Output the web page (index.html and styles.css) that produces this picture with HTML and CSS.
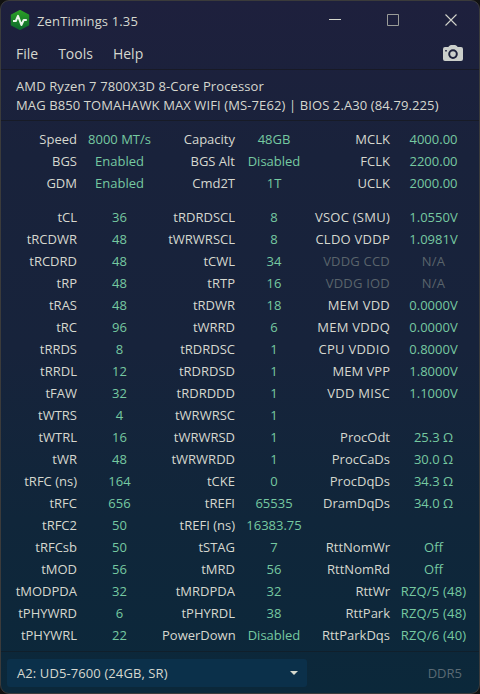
FILE: index.html
```html
<!DOCTYPE html>
<html lang="en">
  <head>
    <meta charset="utf-8" />
    <meta name="viewport" content="width=device-width, initial-scale=1" />
    <title>ZenTimings 1.35</title>
    <link rel="stylesheet" href="styles.css">
  </head>
  <body>
    <div class="window">
      <header class="titlebar">
        <svg class="logo" width="20" height="20" viewBox="0 0 20 20">
          <defs>
            <linearGradient id="green" x1="0" y1="0" x2="0" y2="1">
              <stop offset="0" stop-color="#2ba026" />
              <stop offset="1" stop-color="#0c682c" />
            </linearGradient>
          </defs>
          <path d="M10 0.6 L18.5 5 V15 L10 19.4 L1.5 15 V5 Z" fill="url(#green)" stroke="url(#green)" stroke-width="1.4" stroke-linejoin="round" />
          <path d="M3 11 H5.8 L8 5.8 L11.4 15 L13.7 10 H16.8" fill="none" stroke="#eaf5ea" stroke-width="2" stroke-linejoin="round" />
        </svg>
        <span class="title">ZenTimings 1.35</span>
        <div class="controls">
          <svg width="12" height="12" viewBox="0 0 12 12"><path d="M0 5.5 H12" stroke="#d6d8cd" /></svg>
          <svg width="12" height="12" viewBox="0 0 12 12"><path d="M.5 .5 H11.5 V11.5 H.5 Z" stroke="#9a9c98" fill="none" /></svg>
          <svg width="12" height="12" viewBox="0 0 12 12"><path d="M.5 .5 L11.5 11.5 M11.5 .5 L.5 11.5" stroke="#d0d2ca" stroke-width="1.1" /></svg>
        </div>
      </header>

      <nav class="menu">
        <a class="file">File</a>
        <a class="tools">Tools</a>
        <a class="help">Help</a>
        <svg class="camera" width="20" height="16" viewBox="0 0 20 16">
          <path fill="#cbcfcb" fill-rule="evenodd" d="M2 2 H5.2 L6.8 .6 Q7.3 0 8 0 H12 Q12.7 0 13.2 .6 L14.8 2 H18 Q20 2 20 4 V14 Q20 16 18 16 H2 Q0 16 0 14 V4 Q0 2 2 2 Z M10 4.3 A4.8 4.8 0 1 0 10 13.9 A4.8 4.8 0 1 0 10 4.3 Z M2.2 5 V6.4 H3.8 V5 Z" />
          <circle cx="10" cy="9.1" r="2.8" fill="#cbcfcb" />
        </svg>
      </nav>

      <div class="system">
        <p class="cpu">AMD Ryzen 7 7800X3D 8-Core Processor</p>
        <p class="board">MAG B850 TOMAHAWK MAX WIFI (MS-7E62) | BIOS 2.A30 (84.79.225)</p>
      </div>

      <main>
        <table>
          <colgroup>
            <col class="l1"><col class="v1"><col class="l2"><col class="v2"><col class="l3"><col class="v3">
          </colgroup>
          <tbody>
            <tr><th>Speed</th><td>8000 MT/s</td><th>Capacity</th><td>48GB</td><th>MCLK</th><td>4000.00</td></tr>
            <tr><th>BGS</th><td>Enabled</td><th>BGS Alt</th><td>Disabled</td><th>FCLK</th><td>2200.00</td></tr>
            <tr><th>GDM</th><td>Enabled</td><th>Cmd2T</th><td>1T</td><th>UCLK</th><td>2000.00</td></tr>
          </tbody>
        </table>
        <table>
          <colgroup>
            <col class="l1"><col class="v1"><col class="l2"><col class="v2"><col class="l3"><col class="v3">
          </colgroup>
          <tbody>
            <tr><th>tCL</th><td>36</td><th>tRDRDSCL</th><td>8</td><th class="wide">VSOC (SMU)</th><td>1.0550V</td></tr>
            <tr><th>tRCDWR</th><td>48</td><th>tWRWRSCL</th><td>8</td><th class="wide">CLDO VDDP</th><td>1.0981V</td></tr>
            <tr><th>tRCDRD</th><td>48</td><th>tCWL</th><td>34</td><th class="off">VDDG CCD</th><td class="off">N/A</td></tr>
            <tr><th>tRP</th><td>48</td><th>tRTP</th><td>16</td><th class="off">VDDG IOD</th><td class="off">N/A</td></tr>
            <tr><th>tRAS</th><td>48</td><th>tRDWR</th><td>18</td><th class="wide">MEM VDD</th><td>0.0000V</td></tr>
            <tr><th>tRC</th><td>96</td><th>tWRRD</th><td>6</td><th class="wide">MEM VDDQ</th><td>0.0000V</td></tr>
            <tr><th>tRRDS</th><td>8</td><th>tRDRDSC</th><td>1</td><th class="wide">CPU VDDIO</th><td>0.8000V</td></tr>
            <tr><th>tRRDL</th><td>12</td><th>tRDRDSD</th><td>1</td><th>MEM VPP</th><td>1.8000V</td></tr>
            <tr><th>tFAW</th><td>32</td><th>tRDRDDD</th><td>1</td><th class="wide">VDD MISC</th><td>1.1000V</td></tr>
            <tr><th>tWTRS</th><td>4</td><th>tWRWRSC</th><td>1</td><th></th><td></td></tr>
            <tr><th>tWTRL</th><td>16</td><th>tWRWRSD</th><td>1</td><th>ProcOdt</th><td>25.3 Ω</td></tr>
            <tr><th>tWR</th><td>48</td><th>tWRWRDD</th><td>1</td><th>ProcCaDs</th><td>30.0 Ω</td></tr>
            <tr><th>tRFC (ns)</th><td>164</td><th>tCKE</th><td>0</td><th>ProcDqDs</th><td>34.3 Ω</td></tr>
            <tr><th>tRFC</th><td>656</td><th>tREFI</th><td>65535</td><th>DramDqDs</th><td>34.0 Ω</td></tr>
            <tr><th>tRFC2</th><td>50</td><th>tREFI (ns)</th><td>16383.75</td><th></th><td></td></tr>
            <tr><th>tRFCsb</th><td>50</td><th>tSTAG</th><td>7</td><th>RttNomWr</th><td>Off</td></tr>
            <tr><th>tMOD</th><td>56</td><th>tMRD</th><td>56</td><th>RttNomRd</th><td>Off</td></tr>
            <tr><th>tMODPDA</th><td>32</td><th>tMRDPDA</th><td>32</td><th>RttWr</th><td class="rzq">RZQ/5 (48)</td></tr>
            <tr><th>tPHYWRD</th><td>6</td><th>tPHYRDL</th><td>38</td><th>RttPark</th><td class="rzq">RZQ/5 (48)</td></tr>
            <tr><th>tPHYWRL</th><td>22</td><th>PowerDown</th><td>Disabled</td><th>RttParkDqs</th><td class="rzq">RZQ/6 (40)</td></tr>
          </tbody>
        </table>
      </main>

      <footer>
        <div class="select">
          <span>A2: UD5-7600 (24GB, SR)</span>
          <svg width="8" height="4" viewBox="0 0 8 4"><path d="M0 0 H8 L4 4 Z" fill="#d6d8cd" /></svg>
        </div>
        <span class="memtype">DDR5</span>
      </footer>
    </div>
  </body>
</html>
```

FILE: styles.css
```css
* {
  box-sizing: border-box;
}

body {
  margin: 0;
  background-color: #111;
  font-family: 'Open Sans', 'Noto Sans', sans-serif;
  font-size: 13px;
  color: #d6d8cf;
  white-space: nowrap;
}

.window {
  display: flex;
  flex-direction: column;
  width: 480px;
  height: 694px;
  overflow: hidden;
  border: 1px solid #3b3b3b;
  border-radius: 9px;
  background: linear-gradient(#1e203d, #19223b 22%, #17233b 50%, #10263a 75%, #0b283a);
}

.titlebar {
  display: flex;
  align-items: center;
  height: 36px;
  padding: 2px 22px 0 9px;
}

.title {
  margin-left: 7px;
  padding-top: 2px;
  letter-spacing: 0.15px;
}

.controls {
  display: flex;
  gap: 46px;
  margin-left: auto;
}

.menu {
  display: flex;
  align-items: center;
  height: 33px;
  padding: 0 16px 0 15px;
  border-bottom: 1px solid #181a27;
  font-size: 14px;
}

.tools {
  margin-left: 20px;
}

.help {
  margin-left: 20px;
}

.camera {
  margin-left: auto;
}

.system {
  height: 51px;
  padding: 7px 15px 0;
  border-bottom: 1px solid #171b27;
  line-height: 19px;
  letter-spacing: 0.11px;
}

.system p {
  margin: 0;
}

main {
  height: 531px;
  padding-top: 7px;
  border-bottom: 1px solid #101f2b;
}

table {
  width: 476px;
  table-layout: fixed;
  border-collapse: collapse;
}

table + table {
  margin-top: 12px;
}

.l1 {
  width: 76px;
}

.v1 {
  width: 85px;
}

.l2 {
  width: 73px;
}

.v2 {
  width: 78px;
}

.l3 {
  width: 77px;
}

.v3 {
  width: 87px;
}

tr {
  height: 22px;
}

th,
td {
  height: 22px;
  padding: 0;
  line-height: 22px;
  font-weight: normal;
}

th {
  text-align: right;
}

td {
  text-align: center;
  color: #76c9a1;
}

.wide {
  letter-spacing: 0.25px;
}

.rzq {
  letter-spacing: 0.2px;
}

.off {
  color: #5a646b;
  letter-spacing: 0.2px;
}

footer {
  display: flex;
  align-items: center;
  justify-content: space-between;
  height: 41px;
  padding: 0 17px 0 6px;
}

.select {
  display: flex;
  align-items: center;
  justify-content: space-between;
  width: 300px;
  height: 28px;
  padding: 0 9px 0 10px;
  border-radius: 3px;
  background-color: #0b304a;
  letter-spacing: 0.1px;
}

.memtype {
  color: #5a6a74;
}
```
